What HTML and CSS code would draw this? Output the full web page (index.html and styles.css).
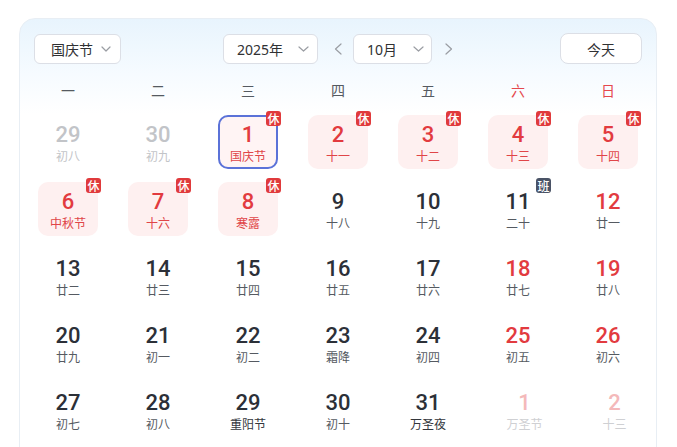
FILE: index.html
```html
<!DOCTYPE html>
<html lang="zh">
<head>
<meta charset="utf-8">
<title>日历</title>
<link rel="stylesheet" href="styles.css">
</head>
<body>
<div class="page">
  <div class="card">
    <div class="toolbar">
      <div class="left">
        <button class="select holiday"><span>国庆节</span><svg class="chev" width="10" height="6" viewBox="0 0 10 6"><path d="M1 1L5 5L9 1"/></svg></button>
      </div>
      <div class="center">
        <button class="select year"><span>2025年</span><svg class="chev" width="11" height="6" viewBox="0 0 11 6"><path d="M1 1L5.5 5L10 1"/></svg></button>
        <svg class="arrow prev" width="8" height="12" viewBox="0 0 8 12"><path d="M7 1L1.5 6L7 11"/></svg>
        <button class="select month"><span>10月</span><svg class="chev" width="11" height="6" viewBox="0 0 11 6"><path d="M1 1L5.5 5L10 1"/></svg></button>
        <svg class="arrow next" width="8" height="12" viewBox="0 0 8 12"><path d="M1 1L6.5 6L1 11"/></svg>
      </div>
      <div class="right">
        <button class="today">今天</button>
      </div>
    </div>
    <div class="weekdays">
      <span>一</span><span>二</span><span>三</span><span>四</span><span>五</span><span class="we">六</span><span class="we">日</span>
    </div>
    <div class="days">
      <div class="day other"><span class="num">29</span><span class="lunar">初八</span></div>
      <div class="day other"><span class="num">30</span><span class="lunar">初九</span></div>
      <div class="day rest selected"><span class="num">1</span><span class="lunar">国庆节</span><span class="badge">休</span></div>
      <div class="day rest"><span class="num">2</span><span class="lunar">十一</span><span class="badge">休</span></div>
      <div class="day rest"><span class="num">3</span><span class="lunar">十二</span><span class="badge">休</span></div>
      <div class="day rest"><span class="num">4</span><span class="lunar">十三</span><span class="badge">休</span></div>
      <div class="day rest"><span class="num">5</span><span class="lunar">十四</span><span class="badge">休</span></div>

      <div class="day rest"><span class="num">6</span><span class="lunar">中秋节</span><span class="badge">休</span></div>
      <div class="day rest"><span class="num">7</span><span class="lunar">十六</span><span class="badge">休</span></div>
      <div class="day rest"><span class="num">8</span><span class="lunar">寒露</span><span class="badge">休</span></div>
      <div class="day"><span class="num">9</span><span class="lunar">十八</span></div>
      <div class="day"><span class="num">10</span><span class="lunar">十九</span></div>
      <div class="day"><span class="num">11</span><span class="lunar">二十</span><span class="badge work">班</span></div>
      <div class="day weekend"><span class="num">12</span><span class="lunar">廿一</span></div>

      <div class="day"><span class="num">13</span><span class="lunar">廿二</span></div>
      <div class="day"><span class="num">14</span><span class="lunar">廿三</span></div>
      <div class="day"><span class="num">15</span><span class="lunar">廿四</span></div>
      <div class="day"><span class="num">16</span><span class="lunar">廿五</span></div>
      <div class="day"><span class="num">17</span><span class="lunar">廿六</span></div>
      <div class="day weekend"><span class="num">18</span><span class="lunar">廿七</span></div>
      <div class="day weekend"><span class="num">19</span><span class="lunar">廿八</span></div>

      <div class="day"><span class="num">20</span><span class="lunar">廿九</span></div>
      <div class="day"><span class="num">21</span><span class="lunar">初一</span></div>
      <div class="day"><span class="num">22</span><span class="lunar">初二</span></div>
      <div class="day"><span class="num">23</span><span class="lunar">霜降</span></div>
      <div class="day"><span class="num">24</span><span class="lunar">初四</span></div>
      <div class="day weekend"><span class="num">25</span><span class="lunar">初五</span></div>
      <div class="day weekend"><span class="num">26</span><span class="lunar">初六</span></div>

      <div class="day"><span class="num">27</span><span class="lunar">初七</span></div>
      <div class="day"><span class="num">28</span><span class="lunar">初八</span></div>
      <div class="day"><span class="num">29</span><span class="lunar fest">重阳节</span></div>
      <div class="day"><span class="num">30</span><span class="lunar">初十</span></div>
      <div class="day"><span class="num">31</span><span class="lunar fest">万圣夜</span></div>
      <div class="day next"><span class="num">1</span><span class="lunar">万圣节</span></div>
      <div class="day next"><span class="num">2</span><span class="lunar">十三</span></div>
    </div>
  </div>
</div>
</body>
</html>
```
FILE: styles.css
```css
html, body {
  margin: 0;
  padding: 0;
  overflow: hidden;
  background: #ffffff;
}

body {
  font-family: "Noto Sans", "Noto Sans CJK SC", sans-serif;
  color: #303133;
}

.page {
  padding: 18px 0 0 19px;
}

.card {
  width: 638px;
  box-sizing: border-box;
  border: 1px solid #e8eef4;
  border-radius: 16px;
  background: linear-gradient(180deg, #e8f4fd 0px, #f6fbff 55px, #ffffff 95px);
  padding: 14px 0 30px;
}

.toolbar {
  display: grid;
  grid-template-columns: 1fr auto 1fr;
  align-items: center;
  padding: 0 14px;
  height: 31px;
}

.left { justify-self: start; }
.right { justify-self: end; }

.center {
  display: flex;
  align-items: center;
}

.select {
  display: flex;
  align-items: center;
  height: 30px;
  box-sizing: border-box;
  border: 1px solid #dcdfe6;
  border-radius: 6px;
  background: #ffffff;
  font-family: "Noto Sans CJK SC", sans-serif;
  font-size: 14px;
  color: #303133;
  white-space: nowrap;
  cursor: pointer;
}

.year span, .month span {
  font-family: "Noto Sans", "Noto Sans CJK SC", sans-serif;
}

.chev {
  flex: none;
}

.chev path, .arrow path {
  fill: none;
  stroke: #9a9da3;
  stroke-width: 1.2;
  stroke-linecap: round;
  stroke-linejoin: round;
}

.holiday {
  padding: 0 9px 0 16px;
  gap: 8px;
}

.year {
  width: 95px;
  padding: 0 8px 0 13px;
  justify-content: space-between;
}

.month {
  width: 79px;
  padding: 0 7px 0 13px;
  justify-content: space-between;
}

.arrow {
  display: block;
  flex: none;
}

.prev {
  margin: 0 11px 0 16px;
}

.next {
  margin-left: 13px;
}

.today {
  width: 82px;
  height: 31px;
  box-sizing: border-box;
  border: 1px solid #dcdfe6;
  border-radius: 8px;
  background: #ffffff;
  font-family: "Noto Sans CJK SC", sans-serif;
  font-size: 14px;
  color: #303133;
}

.weekdays {
  display: grid;
  grid-template-columns: repeat(7, 90px);
  padding: 0 3px;
  margin-top: 11px;
  height: 30px;
  align-items: center;
  justify-items: center;
  font-family: "Noto Sans CJK SC", sans-serif;
  font-size: 14px;
  color: #555a61;
}

.weekdays .we {
  color: #e5484d;
}

.days {
  display: grid;
  grid-template-columns: repeat(7, 90px);
  row-gap: 13px;
  padding: 0 3px;
  margin-top: 10px;
  justify-items: center;
}

.day {
  position: relative;
  width: 60px;
  height: 54px;
  box-sizing: border-box;
  border-radius: 10px;
  display: flex;
  flex-direction: column;
  align-items: center;
  padding-top: 7px;
}

.num {
  font-family: Roboto, "Noto Sans", sans-serif;
  font-size: 22px;
  line-height: 26px;
  font-weight: 500;
  color: #2c3038;
}

.lunar {
  font-family: "Noto Sans CJK SC", sans-serif;
  font-size: 12px;
  line-height: 17.5px;
  margin-top: -1px;
  color: #555a61;
}

.lunar.fest {
  color: #33363c;
}

.day.weekend .num {
  color: #e23b3f;
}

.day.rest {
  background: #fef0f0;
}

.day.rest .num {
  color: #e23b3f;
}

.day.rest .lunar {
  color: #e04548;
}

.day.selected {
  border: 2px solid #5b72d8;
  background: #fff4f4;
  padding-top: 5px;
}

.day.other .num,
.day.other .lunar {
  color: #c2c4c8;
}

.day.next .num {
  color: #f4b9ba;
}

.day.next .lunar {
  color: #cfd0d3;
}

.badge {
  position: absolute;
  top: -4px;
  right: -3px;
  width: 15px;
  height: 15px;
  border-radius: 3px;
  background: #e03a3c;
  color: #ffffff;
  font-family: "Noto Sans CJK SC", sans-serif;
  font-size: 12px;
  line-height: 15px;
  text-align: center;
  font-weight: 500;
}

.day.selected .badge {
  top: -6px;
  right: -5px;
}

.badge.work {
  background: #4a5366;
}
```
